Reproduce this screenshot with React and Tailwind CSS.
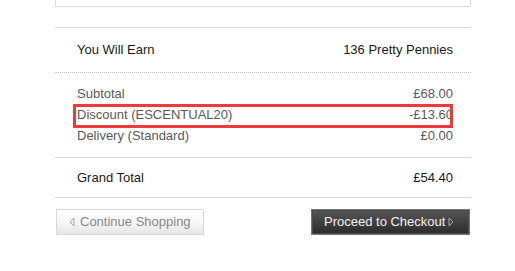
export default function App() {
  const font = { fontFamily: '"Liberation Sans", Arial, sans-serif' };
  return (
    <div className="w-[515px] h-[271px] bg-white overflow-hidden" style={font}>
      <div className="ml-[55px] w-[416px]">
        <div className="h-[7px] border-x border-b border-[#dcdcdc]" />
        <div className="mt-[20px] border-t border-[#dcdcdc]">
          <div className="flex justify-between items-center h-[44px] pl-[22px] pr-[18px] text-[13px] text-[#1a1a1a]">
            <span>You Will Earn</span>
            <span>136 Pretty Pennies</span>
          </div>
          <div className="border-t border-dotted border-[#c4c4c4]" />
          <div className="pt-[10px] pb-[11px] pl-[22px] pr-[18px] text-[13px] text-[#5a5a5a]">
            <div className="flex justify-between items-center h-[21px]">
              <span>Subtotal</span>
              <span>£68.00</span>
            </div>
            <div className="relative flex justify-between items-center h-[21px]">
              <span>Discount (ESCENTUAL20)</span>
              <span>-£13.60</span>
              <div className="absolute left-[-4px] right-0 top-[0px] h-[24px] border-[3px] border-[#f0393c]" />
            </div>
            <div className="flex justify-between items-center h-[21px]">
              <span>Delivery (Standard)</span>
              <span>£0.00</span>
            </div>
          </div>
          <div className="border-t border-[#dcdcdc]" />
          <div className="flex justify-between items-center h-[39px] pl-[22px] pr-[18px] text-[13px] text-[#1a1a1a]">
            <span>Grand Total</span>
            <span>£54.40</span>
          </div>
          <div className="border-t border-[#dcdcdc]" />
        </div>
        <div className="mt-[11px] flex justify-between items-start pl-px pr-[1px]">
          <button className="h-[26px] w-[148px] flex items-center border border-[#d9d9d9] bg-gradient-to-b from-white via-[#f7f7f7] to-[#e6e6e6] pl-[12px] text-[13px] text-[#888]" style={font}>
            <svg width="6" height="10" viewBox="0 0 6 10" className="mr-[5px]">
              <path d="M5 1 L1 5 L5 9 Z" fill="none" stroke="#aaa" strokeWidth="1" />
            </svg>
            <span>Continue Shopping</span>
          </button>
          <button className="h-[26px] w-[159px] flex items-center border border-[#777] bg-gradient-to-b from-[#575757] via-[#404040] to-[#2c2c2c] pl-[12px] text-[13px] text-[#f2f2f2] shadow-[inset_0_0_0_1px_#4a4a4a]" style={font}>
            <span>Proceed to Checkout</span>
            <svg width="6" height="10" viewBox="0 0 6 10" className="ml-[3px]">
              <path d="M1 1 L5 5 L1 9 Z" fill="none" stroke="#aaa" strokeWidth="1" />
            </svg>
          </button>
        </div>
      </div>
    </div>
  );
}
